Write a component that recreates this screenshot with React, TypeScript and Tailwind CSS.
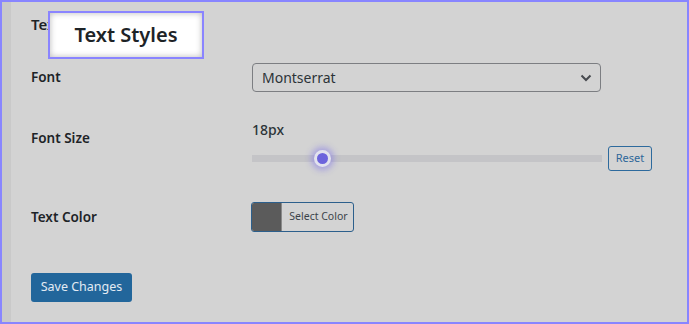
import React from "react";

export default function App() {
  const font = { fontFamily: '"Noto Sans", "Open Sans", sans-serif' };
  return (
    <div
      className="relative w-[689px] h-[324px] border-2 border-[#8885ff] bg-[#d3d3d3] flex overflow-hidden text-[#1d2327]"
      style={font}
    >
      <div className="w-[9px] h-full bg-[#c9c9c9] shrink-0" />
      <div className="flex flex-col pl-[20px]">
        <h2 className="mt-[12px] h-[20px] leading-[20px] text-[15px] font-semibold">Text Styles</h2>

        <div className="mt-[29px] flex items-center h-[29px]">
          <div className="w-[221px] text-[13.5px] font-semibold">Font</div>
          <div className="w-[349px] h-[29px] border border-[#7c7e82] rounded-[4px] flex items-center justify-between pl-[9px] pr-[8px]">
            <span className="text-[14px] text-[#2c3338]">Montserrat</span>
            <svg width="12" height="8" viewBox="0 0 12 8" fill="none">
              <path d="M1.5 1.5 L6 6 L10.5 1.5" stroke="#474a4f" strokeWidth="2" />
            </svg>
          </div>
        </div>

        <div className="mt-[28px] flex">
          <div className="w-[221px] mt-[8px] text-[13.5px] font-semibold leading-[20px]">Font Size</div>
          <div className="flex flex-col">
            <div className="h-[20px] leading-[20px] text-[14px] font-medium text-[#2c3338]">18px</div>
            <div className="mt-[6px] flex items-center gap-[6px] h-[25px]">
              <div className="relative w-[350px] h-[7px] bg-[#c4c4c7]">
                <div className="absolute left-[62px] top-[-5px] w-[17px] h-[17px] rounded-full border-[3px] border-[#e2e2ee] bg-[#6c63dc] shadow-[0_0_6px_3px_rgba(112,100,235,0.45)]" />
              </div>
              <div className="w-[44px] h-[25px] border border-[#2d6a9d] rounded-[3px] flex items-center justify-center text-[11px] text-[#2e679a]">
                Reset
              </div>
            </div>
          </div>
        </div>

        <div className="mt-[31px] flex items-center h-[30px]">
          <div className="w-[220px] text-[13.5px] font-semibold">Text Color</div>
          <div className="w-[103px] h-[30px] border border-[#2c5f8c] rounded-[3px] flex overflow-hidden">
            <div className="w-[30px] h-full bg-[#5b5b5b] border-r border-[#8a8a8a]" />
            <div className="flex-1 flex items-center justify-center pl-[2px] text-[10.5px] text-[#3c434a]">Select Color</div>
          </div>
        </div>

        <div className="mt-[41px] w-[101px] h-[29px] bg-[#22669b] rounded-[3px] flex items-center justify-center text-[12.5px] text-[#e3ebf3]">
          Save Changes
        </div>
      </div>

      <div className="absolute left-[46px] top-[9px] w-[156px] h-[48px] border-2 border-[#8a84ff] bg-white shadow-[inset_0_0_6px_rgba(0,0,0,0.28)] flex items-center justify-center">
        <span className="text-[20px] font-semibold text-[#1d2327]">Text Styles</span>
      </div>
    </div>
  );
}
